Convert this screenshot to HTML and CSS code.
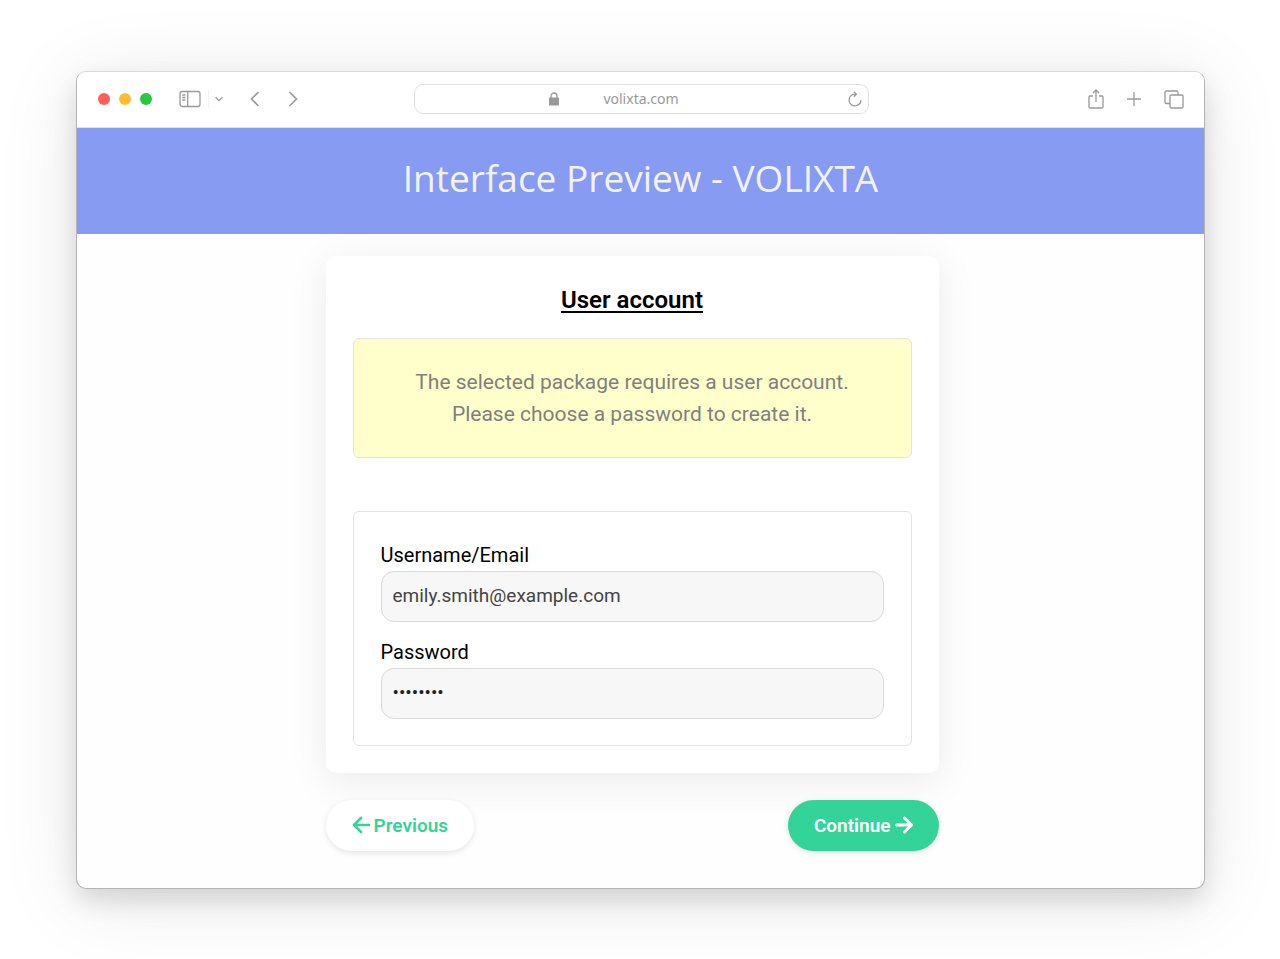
FILE: index.html
```html
<!DOCTYPE html>
<html lang="en">
<head>
<meta charset="utf-8">
<meta name="viewport" content="width=device-width, initial-scale=1">
<title>Interface Preview - VOLIXTA</title>
<link rel="stylesheet" href="styles.css">
</head>
<body>
<div class="window">
  <div class="toolbar">
    <div class="tools tools-left">
      <div class="lights">
        <span class="light light-red"></span>
        <span class="light light-yellow"></span>
        <span class="light light-green"></span>
      </div>
      <button class="tool" type="button" aria-label="Sidebar">
        <svg width="22" height="18" viewBox="0 0 22 18"><rect x="1" y="1.5" width="20" height="15" rx="2.2"/><path d="M8.7 1.5v15M3.2 5h3.2M3.2 7.5h3.2M3.2 10h3.2"/></svg>
      </button>
      <button class="tool tool-menu" type="button" aria-label="Tab groups">
        <svg width="8" height="6" viewBox="0 0 8 6"><path d="M.6 1.200L4 4.600l3.400-3.400"/></svg>
      </button>
      <button class="tool tool-back" type="button" aria-label="Back">
        <svg width="10" height="16" viewBox="0 0 10 16"><path class="bold" d="M8.500 1L1.500 8l7 7"/></svg>
      </button>
      <button class="tool tool-forward" type="button" aria-label="Forward">
        <svg width="10" height="16" viewBox="0 0 10 16"><path class="bold" d="M1.500 1l7 7-7 7"/></svg>
      </button>
    </div>
    <div class="address">
      <svg class="lock" width="12" height="14" viewBox="0 0 12 14"><rect class="solid" x="1" y="5.500" width="10" height="8" rx=".8"/><path d="M3 6V4a3 3 0 0 1 6 0v2"/></svg>
      <span class="host">volixta.com</span>
      <button class="tool reload" type="button" aria-label="Reload">
        <svg width="14" height="16" viewBox="0 0 14 16"><path d="M8 3.200A5.900 5.900 0 1 0 12.900 9M5.800.6L8.400 3.200 5.800 5.800"/></svg>
      </button>
    </div>
    <div class="tools tools-right">
      <button class="tool" type="button" aria-label="Share">
        <svg width="16" height="20" viewBox="0 0 16 20"><path d="M5 7H2a1 1 0 0 0-1 1v10a1 1 0 0 0 1 1h12a1 1 0 0 0 1-1V8a1 1 0 0 0-1-1h-3M8 13V1.200M4.800 4.200L8 1l3.200 3.200"/></svg>
      </button>
      <button class="tool" type="button" aria-label="New tab">
        <svg width="16" height="16" viewBox="0 0 16 16"><path d="M8 1v14M1 8h14"/></svg>
      </button>
      <button class="tool" type="button" aria-label="Tab overview">
        <svg width="20" height="20" viewBox="0 0 20 20"><rect x="6" y="6" width="13" height="13" rx="1.200"/><path d="M6 14.500H2.200A1.200 1.200 0 0 1 1 13.300V3.200A1.200 1.200 0 0 1 2.200 2h10.600A1.200 1.200 0 0 1 14 3.200V6"/></svg>
      </button>
    </div>
  </div>
  <header class="banner"><h1 class="banner-title">Interface Preview - VOLIXTA</h1></header>
  <main class="page">
    <form class="account">
      <section class="card">
        <h2 class="card-title">User account</h2>
        <p class="notice">The selected package requires a user account.<br>Please choose a password to create it.</p>
        <div class="fields">
          <div class="field">
            <label class="label" for="username">Username/Email</label>
            <input class="input" id="username" type="text" value="emily.smith@example.com">
          </div>
          <div class="field">
            <label class="label" for="password">Password</label>
            <input class="input input-password" id="password" type="password" value="password" autocomplete="off">
          </div>
        </div>
      </section>
      <div class="actions">
        <button class="button button-light" type="button">
          <svg class="arrow" width="18" height="18" viewBox="0 0 18 18"><path d="M9 2L2 9l7 7M2.500 9H17"/></svg>
          Previous
        </button>
        <button class="button button-primary" type="button">
          Continue
          <svg class="arrow arrow-bold" width="18" height="18" viewBox="0 0 18 18"><path d="M9.500 2l7 7-7 7M15.500 9H1.500"/></svg>
        </button>
      </div>
    </form>
  </main>
</div>
</body>
</html>
```
FILE: styles.css
```css
* { box-sizing: border-box; }

body {
  margin: 0;
  padding: 71px 75px 70px 76px;
  background: #fff;
  font-family: Roboto, "Liberation Sans", sans-serif;
  color: #000;
}

.window {
  overflow: hidden;
  background: #fefefe;
  border: 1px solid #b4b4b4;
  border-top-color: #dadada;
  border-radius: 10px;
  box-shadow: 0 12px 24px rgba(0, 0, 0, .12), 0 10px 80px rgba(0, 0, 0, .1);
}

.toolbar {
  display: grid;
  grid-template-columns: 1fr 455px 1fr;
  align-items: center;
  height: 56px;
  padding: 0 20px 2px 21px;
  background: #fff;
  border-bottom: 1px solid #dcdff0;
}

.tools { display: flex; align-items: center; }
.tools-right { justify-content: flex-end; gap: 22px; }

.lights { display: flex; gap: 9px; margin-right: 27px; }
.light { width: 12px; height: 12px; border-radius: 50%; }
.light-red { background: #ff5f57; }
.light-yellow { background: #febc2e; }
.light-green { background: #28c840; }

.tool {
  display: flex;
  padding: 0;
  border: 0;
  background: none;
}

.tool svg, .lock {
  fill: none;
  stroke: #999;
  stroke-width: 1.3;
}
.tool .bold { stroke-width: 1.6; }
.lock .solid { fill: #999; stroke: none; }

.tool-menu {
  align-items: center;
  height: 18px;
  margin-left: 7px;
  padding-left: 6px;
  border-left: 1px solid #f2f2f2;
}
.tool-back { margin-left: 27px; }
.tool-forward { margin-left: 28px; }

.address {
  display: grid;
  grid-template-columns: 1fr auto 1fr;
  align-items: center;
  height: 30px;
  padding: 0 6px;
  border: 1px solid #dfdfdf;
  border-radius: 9px;
}
.lock { justify-self: end; margin-right: 43px; }
.host { font: 14px/20px "Noto Sans", sans-serif; color: #999; }
.reload { justify-self: end; }

.banner {
  padding: 24px 20px 30px;
  background: #879bf3;
  text-align: center;
}
.banner-title {
  margin: 0;
  font: 400 37px/52px "Open Sans", sans-serif;
  color: #f2f2f2;
}

.page {
  display: flex;
  justify-content: center;
  padding: 22px 17px 37px 0;
}
.account { width: 100%; max-width: 613px; }

.card {
  padding: 27px;
  background: #fff;
  border-radius: 10px;
  box-shadow: 0 8px 40px rgba(0, 0, 0, .08);
}
.card-title {
  margin: 0 0 21px;
  font-size: 24px;
  line-height: 34px;
  font-weight: 600;
  text-align: center;
  text-decoration: underline 2px;
  text-underline-offset: 3px;
}

.notice {
  margin: 0 0 53px;
  padding: 27px;
  background: #ffffcb;
  border: 1px solid #e3e3e3;
  border-radius: 6px;
  font-size: 21px;
  line-height: 32px;
  text-align: center;
  color: #808080;
}

.fields {
  display: grid;
  gap: 14px;
  padding: 27px 27px 26px;
  border: 1px solid #e3e3e3;
  border-radius: 6px;
}
.label {
  display: block;
  font-size: 20px;
  line-height: 32px;
}
.input {
  display: block;
  width: 100%;
  height: 51px;
  padding: 0 11px 2px;
  background: #f7f7f7;
  border: 1px solid #dadada;
  border-radius: 13px;
  font: 19px Roboto, sans-serif;
  color: #444;
}
.input-password { color: #222; }

.actions {
  display: flex;
  justify-content: space-between;
  padding-top: 27px;
}
.button {
  display: flex;
  align-items: center;
  gap: 4px;
  height: 51px;
  padding: 0 26px 1px;
  border: 0;
  border-radius: 26px;
  font: 600 19px Roboto, sans-serif;
  box-shadow: 0 2px 6px rgba(0, 0, 0, .1);
}
.button-light { background: #fff; color: #34d399; }
.button-primary { background: #34d399; color: #fff; }
.arrow {
  fill: none;
  stroke: currentColor;
  stroke-width: 2.6;
  stroke-linecap: round;
  stroke-linejoin: round;
}
.arrow-bold { stroke-width: 3; }
```
